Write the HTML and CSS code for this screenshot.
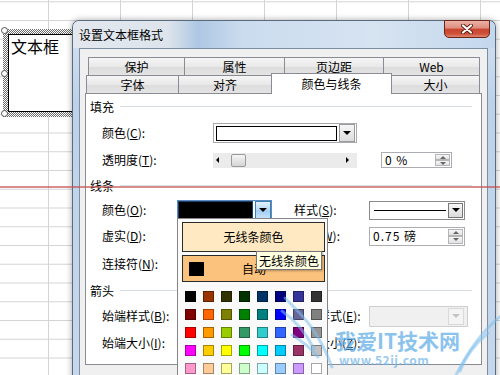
FILE: index.html
```html
<!DOCTYPE html>
<html lang="zh-CN">
<head>
    <meta charset="UTF-8">
    <meta name="viewport" content="width=device-width, initial-scale=1.0">
    <title>设置文本框格式</title>
    <link rel="stylesheet" href="styles.css">
</head>
<body>
<div class="desktop">
    <!-- the selected text box on the sheet -->
    <div class="textbox">
        <div class="textbox-inner">文本框</div>
    </div>
    <span class="handle handle-top"></span>
    <span class="handle handle-mid"></span>
    <span class="handle handle-bottom"></span>

    <div class="dialog">
        <div class="titlebar">
            <span class="title">设置文本框格式</span>
            <span class="close">
                <svg width="12" height="10" viewBox="0 0 12 10">
                    <path d="M2 1.5 L10 8.5 M10 1.5 L2 8.5" stroke="#5a1c12" stroke-width="4" stroke-linecap="round"/>
                    <path d="M2 1.5 L10 8.5 M10 1.5 L2 8.5" stroke="#fff" stroke-width="2.2" stroke-linecap="round"/>
                </svg>
            </span>
        </div>
        <div class="client">
            <div class="tabrow tabrow-back">
                <div class="tab">保护</div>
                <div class="tab">属性</div>
                <div class="tab">页边距</div>
                <div class="tab">Web</div>
            </div>
            <div class="tabrow tabrow-front">
                <div class="tab">字体</div>
                <div class="tab">对齐</div>
                <div class="tab tab-active">颜色与线条</div>
                <div class="tab">大小</div>
            </div>
            <div class="panel">
                <div class="group g-fill"><span>填充</span></div>
                <div class="row r-color">
                    <span class="lbl lbl-fill">颜色(<u>C</u>):</span>
                    <div class="combo combo-fill">
                        <div class="color-bar"></div>
                        <div class="drop"></div>
                    </div>
                </div>
                <div class="row r-trans">
                    <span class="lbl lbl-fill">透明度(<u>T</u>):</span>
                    <div class="slider">
                        <span class="arrow-left"></span>
                        <span class="thumb"></span>
                        <span class="arrow-right"></span>
                    </div>
                    <div class="spin spin-pct">
                        <span class="spin-val">0 %</span>
                        <span class="spin-btns"><span class="spin-up"></span><span class="spin-down"></span></span>
                    </div>
                </div>
                <div class="group g-line"><span>线条</span></div>
                <div class="row r-linecolor">
                    <span class="lbl lbl-line">颜色(<u>O</u>):</span>
                    <div class="combo combo-line">
                        <div class="black-bar"></div>
                        <div class="drop drop-hot"></div>
                    </div>
                    <span class="lbl lbl-style">样式(<u>S</u>):</span>
                    <div class="combo combo-style">
                        <div class="line-sample"></div>
                        <div class="drop"></div>
                    </div>
                </div>
                <div class="row r-dash">
                    <span class="lbl lbl-wide">虚实(<u>D</u>):</span>
                    <span class="lbl lbl-side">粗细(<u>W</u>):</span>
                    <div class="spin spin-weight">
                        <span class="spin-val">0.75 磅</span>
                        <span class="spin-btns"><span class="spin-up"></span><span class="spin-down"></span></span>
                    </div>
                </div>
                <div class="row r-connector">
                    <span class="lbl lbl-wide">连接符(<u>N</u>):</span>
                </div>
                <div class="group g-arrow"><span>箭头</span></div>
                <div class="row r-begin">
                    <span class="lbl lbl-wide">始端样式(<u>B</u>):</span>
                    <span class="lbl lbl-side">末端样式(<u>E</u>):</span>
                    <div class="combo combo-off">
                        <div class="drop drop-off"></div>
                    </div>
                </div>
                <div class="row r-size">
                    <span class="lbl lbl-wide">始端大小(<u>I</u>):</span>
                    <span class="lbl lbl-side">末端大小(<u>Z</u>):</span>
                </div>
            </div>
        </div>
    </div>

    <!-- line colour drop-down -->
    <div class="popup">
        <div class="pop-btn pop-none">无线条颜色</div>
        <div class="pop-btn pop-auto"><span class="auto-swatch"></span><span class="auto-text">自动</span></div>
        <div class="palette">
            <span class="sw" style="background:#000000"></span>
            <span class="sw" style="background:#993300"></span>
            <span class="sw" style="background:#333300"></span>
            <span class="sw" style="background:#003300"></span>
            <span class="sw" style="background:#003366"></span>
            <span class="sw" style="background:#000080"></span>
            <span class="sw" style="background:#333399"></span>
            <span class="sw" style="background:#333333"></span>
            <span class="sw" style="background:#800000"></span>
            <span class="sw" style="background:#ff6600"></span>
            <span class="sw" style="background:#808000"></span>
            <span class="sw" style="background:#008000"></span>
            <span class="sw" style="background:#008080"></span>
            <span class="sw" style="background:#0000ff"></span>
            <span class="sw" style="background:#666699"></span>
            <span class="sw" style="background:#808080"></span>
            <span class="sw" style="background:#ff0000"></span>
            <span class="sw" style="background:#ff9900"></span>
            <span class="sw" style="background:#99cc00"></span>
            <span class="sw" style="background:#339966"></span>
            <span class="sw" style="background:#33cccc"></span>
            <span class="sw" style="background:#3366ff"></span>
            <span class="sw" style="background:#800080"></span>
            <span class="sw" style="background:#969696"></span>
            <span class="sw" style="background:#ff00ff"></span>
            <span class="sw" style="background:#ffcc00"></span>
            <span class="sw" style="background:#ffff00"></span>
            <span class="sw" style="background:#00ff00"></span>
            <span class="sw" style="background:#00ffff"></span>
            <span class="sw" style="background:#00ccff"></span>
            <span class="sw" style="background:#993366"></span>
            <span class="sw" style="background:#c0c0c0"></span>
            <span class="sw" style="background:#ff99cc"></span>
            <span class="sw" style="background:#ffcc99"></span>
            <span class="sw" style="background:#ffff99"></span>
            <span class="sw" style="background:#ccffcc"></span>
            <span class="sw" style="background:#ccffff"></span>
            <span class="sw" style="background:#99ccff"></span>
            <span class="sw" style="background:#cc99ff"></span>
            <span class="sw" style="background:#ffffff"></span>
        </div>
    </div>
    <div class="tooltip">无线条颜色</div>

    <div class="redline"></div>

    <div class="watermark">
        <svg class="wings" width="230" height="90" viewBox="0 0 230 90">
            <path d="M15 13 C30 28 48 44 62 82" />
            <path d="M12 26 C26 36 36 48 44 64" />
            <path d="M22 50 C32 56 40 62 48 72" />
            <path d="M232 30 C214 44 200 62 186 90" />
            <path d="M218 48 C206 58 196 70 190 86" />
        </svg>
        <span class="wm-title">我爱IT技术网</span>
        <span class="wm-url">www.52ij.com</span>
    </div>
</div>
</body>
</html>
```

FILE: styles.css
```css
* {
    box-sizing: border-box;
}
body {
    margin: 0;
    font-family: "Noto Sans CJK SC", "Liberation Sans", sans-serif;
    font-size: 12px;
    color: #000;
}
.desktop {
    position: relative;
    width: 500px;
    height: 375px;
    overflow: hidden;
    background-color: #fff;
    /* excel cell grid */
    background-image:
        linear-gradient(to right, #d4d4d4 1px, transparent 1px),
        linear-gradient(to bottom, #d4d4d4 1px, transparent 1px);
    background-size: 72px 100%, 100% 18.75px;
    background-position: 48px 0, 0 20px;
}

/* text box */
.textbox {
    position: absolute;
    left: 3px;
    top: 29px;
    width: 120px;
    height: 88px;
    padding: 5px;
    background: repeating-conic-gradient(#6a6a6a 0 25%, #fff 0 50%) 0 0 / 2px 2px;
}
.textbox-inner {
    height: 100%;
    border: 1px solid #000;
    background: #fff;
    padding: 2px;
    font-size: 16px;
    line-height: 18px;
}
.handle {
    position: absolute;
    left: 1px;
    width: 7px;
    height: 7px;
    border: 1px solid #555;
    border-radius: 50%;
    background: #fff;
}
.handle-top { top: 27px; }
.handle-mid { top: 70px; }
.handle-bottom { top: 110px; }

/* dialog window */
.dialog {
    position: absolute;
    left: 72px;
    top: 20px;
    width: 424px;
    height: 380px;
    border: 1px solid #5a6b80;
    border-bottom: none;
    border-radius: 7px 7px 0 0;
    background: linear-gradient(to bottom, #d7e3f0, #bdd2e9 80px, #c6d8ec);
    box-shadow: 0 0 6px rgba(0, 0, 0, 0.35);
}
.titlebar {
    display: flex;
    justify-content: space-between;
    align-items: flex-start;
    height: 27px;
    padding: 0 5px 0 6px;
    border-radius: 6px 6px 0 0;
    background: linear-gradient(to right, #e3e8ee 0, #dde4ec 95px, #aec7e3 125px, #cbdcef 170px, #d6e3f1 300px, #c3d7ed 100%);
}
.title {
    line-height: 27px;
}
.close {
    display: flex;
    align-items: center;
    justify-content: center;
    width: 46px;
    height: 18px;
    margin-top: -1px;
    border: 1px solid #6b2418;
    border-radius: 0 0 5px 5px;
    background: linear-gradient(to bottom, #eab2a6 0, #de8c7c 45%, #c7442d 50%, #cf5139 80%, #e0866e 100%);
}
.client {
    height: 360px;
    margin: 0 7px 0 6px;
    padding: 8px 0 0 5px;
    border: 1px solid #7d8da3;
    background: #f0f0f0;
}

/* tabs */
.tabrow {
    display: grid;
    height: 18px;
}
.tabrow-back {
    margin-left: 3px;
    grid-template-columns: 97px 100px 99px 96px;
}
.tabrow-front {
    margin-left: 1px;
    grid-template-columns: 93px 93px 120px 88px;
}
.tab {
    border-top: 1px solid #898c95;
    border-right: 1px solid #898c95;
    background: linear-gradient(#f5f5f5, #e9e9e9 50%, #dcdcdc 51%, #e4e4e4);
    text-align: center;
    line-height: 17px;
}
.tab:first-child {
    border-left: 1px solid #898c95;
}
.tab-active {
    position: relative;
    z-index: 1;
    margin: -2px 0 -1px -1px;
    border-left: 1px solid #898c95;
    background: #fff;
    line-height: 20px;
}

/* tab page */
.panel {
    display: flex;
    flex-direction: column;
    width: 397px;
    height: 272px;
    padding-top: 3px;
    border: 1px solid #898c95;
    background: #fff;
}
.group {
    display: flex;
    align-items: center;
    padding: 0 9px 0 4px;
}
.group::after {
    content: '';
    flex: 1;
    height: 1px;
    margin-left: 6px;
    background: #d5dfe5;
}
.g-fill { height: 18px; }
.g-line { height: 32px; }
.g-arrow { height: 30px; }
.row {
    display: flex;
    align-items: center;
    padding-left: 16px;
}
.r-color { height: 36px; }
.r-trans { height: 18px; }
.r-linecolor { height: 18px; }
.r-dash { height: 34px; }
.r-connector { height: 22px; }
.r-begin { height: 22px; }
.r-size { height: 32px; }
.lbl {
    flex: none;
    line-height: 16px;
    white-space: nowrap;
}
.lbl-fill { width: 111px; }
.lbl-line { width: 75px; }
.lbl-wide { width: 192px; }
.lbl-side { width: 75px; }
.lbl-style {
    width: 97px;
    padding-left: 22px;
}

/* controls */
.combo {
    display: flex;
    flex: none;
    border: 1px solid #a7abb0;
    background: #fff;
}
.drop {
    display: flex;
    align-items: center;
    justify-content: center;
    flex: none;
    width: 16px;
    border: 1px solid #9b9b9b;
    background: linear-gradient(#f6f6f6, #dcdcdc);
}
.drop::before {
    content: '';
    border-left: 4px solid transparent;
    border-right: 4px solid transparent;
    border-top: 4px solid #000;
}
.combo-fill {
    width: 144px;
    height: 20px;
}
.combo-fill .drop {
    margin-right: 1px;
}
.color-bar {
    flex: 1;
    margin: 2px 2px 1px 2px;
    border: 1px solid #000;
}
.combo-line {
    width: 95px;
    height: 20px;
    gap: 2px;
    border-color: #5b8cc4;
}
.black-bar {
    flex: 1;
    border: 1px solid #1d3f6a;
    background: #000;
}
.drop-hot {
    border-color: #3c7fb1;
    background: linear-gradient(#e5f2fd, #b6d9f6 50%, #a0cdf3 51%, #c3e1f8);
}
.combo-style {
    width: 96px;
    height: 19px;
    padding: 1px;
    border-color: #8a8a8a;
}
.combo-style .drop {
    width: 15px;
    border-color: #777;
}
.line-sample {
    display: flex;
    align-items: center;
    flex: 1;
    padding: 0 2px 0 3px;
}
.line-sample::before {
    content: '';
    flex: 1;
    height: 1px;
    background: #000;
}
.combo-off {
    justify-content: flex-end;
    width: 99px;
    height: 21px;
    padding: 1px 3px 1px 1px;
    border-color: #cfcfcf;
    background: #f0f0f0;
}
.drop-off {
    border-color: #d9d9d9;
    background: #f4f4f4;
}
.drop-off::before {
    border-top-color: #c4c4c4;
}
.slider {
    display: flex;
    align-items: center;
    flex: none;
    width: 144px;
    height: 15px;
    padding: 0 8px 0 3px;
    background: #ebebeb;
}
.arrow-left {
    border-top: 3px solid transparent;
    border-bottom: 3px solid transparent;
    border-right: 3px solid #000;
}
.arrow-right {
    margin-left: auto;
    border-top: 3px solid transparent;
    border-bottom: 3px solid transparent;
    border-left: 3px solid #000;
}
.thumb {
    width: 15px;
    height: 13px;
    margin-left: 12px;
    border: 1px solid #999;
    border-radius: 2px;
    background: linear-gradient(#f5f5f5, #d5d5d5);
}
.spin {
    display: flex;
    align-items: center;
    flex: none;
    padding-left: 3px;
    border: 1px solid #abadb3;
    background: #fff;
}
.spin-pct {
    width: 71px;
    height: 16px;
    margin-left: 24px;
}
.spin-weight {
    width: 96px;
    height: 19px;
}
.spin-val {
    flex: 1;
    line-height: 14px;
    letter-spacing: 1px;
}
.spin-btns {
    display: flex;
    flex-direction: column;
    align-self: stretch;
    width: 15px;
    margin: 1px;
}
.spin-btns span {
    display: flex;
    align-items: center;
    justify-content: center;
    flex: 1;
    border: 1px solid #b5b5b5;
    background: linear-gradient(#f7f7f7, #e2e2e2);
}
.spin-up::before,
.spin-down::before {
    content: '';
    border-left: 3px solid transparent;
    border-right: 3px solid transparent;
}
.spin-up::before { border-bottom: 3px solid #666; }
.spin-down::before { border-top: 3px solid #666; }

/* colour drop-down */
.popup {
    position: absolute;
    left: 177px;
    top: 218px;
    width: 151px;
    height: 170px;
    padding-top: 3px;
    border: 1px solid #868686;
    background: #fafafa;
}
.pop-btn {
    margin: 0 2px 0 4px;
    border: 1px solid #2b2b2b;
}
.pop-none {
    height: 30px;
    line-height: 28px;
    text-align: center;
    background: #fee9c3;
}
.pop-auto {
    display: flex;
    align-items: center;
    height: 27px;
    margin-top: 3px;
    padding-left: 6px;
    background: #fbc27e;
}
.auto-swatch {
    width: 15px;
    height: 14px;
    background: #000;
}
.auto-text {
    margin-left: 38px;
}
.palette {
    display: grid;
    grid-template-columns: repeat(8, 11px);
    grid-auto-rows: 11px;
    gap: 7px;
    margin-top: 9px;
    padding-left: 7px;
}
.sw {
    border: 1px solid rgba(0, 0, 0, 0.35);
}
.tooltip {
    position: absolute;
    left: 256px;
    top: 251px;
    width: 66px;
    height: 19px;
    border: 1px solid #767676;
    background: #ffffe1;
    line-height: 17px;
    text-align: center;
    box-shadow: 1px 1px 2px rgba(0, 0, 0, 0.3);
}

/* overlays on the photo */
.redline {
    position: absolute;
    left: 0;
    top: 186px;
    width: 500px;
    height: 2px;
    background: rgba(196, 78, 78, 0.65);
}
.watermark {
    position: absolute;
    left: 270px;
    top: 285px;
    display: flex;
    flex-direction: column;
    width: 230px;
    height: 90px;
    padding: 42px 0 0 65px;
    pointer-events: none;
}
.wings {
    position: absolute;
    left: 0;
    top: 0;
}
.wings path {
    fill: none;
    stroke: #7fc0ee;
    stroke-width: 3;
    stroke-linecap: round;
    opacity: 0.55;
}
.wm-title {
    position: relative;
    font-size: 21px;
    font-weight: bold;
    line-height: 26px;
    color: #5aaae6;
    opacity: 0.7;
    text-shadow: 0 0 1px #fff;
}
.wm-url {
    position: relative;
    margin-left: 4px;
    font-size: 12px;
    font-weight: bold;
    line-height: 14px;
    letter-spacing: 0.5px;
    color: #6fb4e8;
    opacity: 0.7;
}
```
